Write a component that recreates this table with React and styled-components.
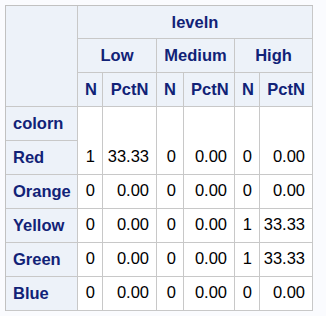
import React from "react";
import styled, { createGlobalStyle } from "styled-components";

const GlobalStyle = createGlobalStyle`
  html, body {
    margin: 0;
    padding: 0;
    background: #fafbfe;
  }
  body {
    padding: 5px 0 0 5px;
    font-family: "Liberation Sans", Arial, sans-serif;
  }
`;

const Table = styled.table`
  border-collapse: separate;
  border-spacing: 0;
  table-layout: fixed;
  width: 308px;
  border-top: 1px solid #c1c1c1;
  border-left: 1px solid #c1c1c1;
  font-size: 16.5px;
`;

const Header = styled.th`
  box-sizing: border-box;
  background: #edf2f9;
  color: #112277;
  font-weight: bold;
  text-align: ${(p) => (p.$left ? "left" : "center")};
  vertical-align: middle;
  padding: 0 7px;
  border-right: 1px solid #c8c8c8;
  border-bottom: 1px solid #c8c8c8;
  height: ${(p) => p.$h || 34}px;
  white-space: nowrap;
`;

const Cell = styled.td`
  box-sizing: border-box;
  background: #ffffff;
  color: #000000;
  text-align: right;
  vertical-align: bottom;
  padding: 0 7px 8px 0;
  border-right: 1px solid #c8c8c8;
  border-bottom: 1px solid #c8c8c8;
  height: 34px;
  white-space: nowrap;
`;

const widths = [72, 25, 54, 27, 51, 25, 53];

const rows = [
  ["Red", [1, "33.33", 0, "0.00", 0, "0.00"]],
  ["Orange", [0, "0.00", 0, "0.00", 0, "0.00"]],
  ["Yellow", [0, "0.00", 0, "0.00", 1, "33.33"]],
  ["Green", [0, "0.00", 0, "0.00", 1, "33.33"]],
  ["Blue", [0, "0.00", 0, "0.00", 0, "0.00"]],
];

const levels = ["Low", "Medium", "High"];

export default function App() {
  const [first, ...rest] = rows;
  return (
    <>
      <GlobalStyle />
      <Table>
        <colgroup>
          {widths.map((w, i) => (
            <col key={i} style={{ width: w }} />
          ))}
        </colgroup>
        <thead>
          <tr>
            <Header rowSpan={3} $h={33} />
            <Header colSpan={6} $h={33}>
              leveln
            </Header>
          </tr>
          <tr>
            {levels.map((l) => (
              <Header key={l} colSpan={2}>
                {l}
              </Header>
            ))}
          </tr>
          <tr>
            {levels.map((l) => (
              <React.Fragment key={l}>
                <Header>N</Header>
                <Header>PctN</Header>
              </React.Fragment>
            ))}
          </tr>
        </thead>
        <tbody>
          <tr>
            <Header $left>colorn</Header>
            {first[1].map((v, i) => (
              <Cell key={i} rowSpan={2}>
                {v}
              </Cell>
            ))}
          </tr>
          <tr>
            <Header $left>{first[0]}</Header>
          </tr>
          {rest.map(([name, vals]) => (
            <tr key={name}>
              <Header $left>{name}</Header>
              {vals.map((v, i) => (
                <Cell key={i}>{v}</Cell>
              ))}
            </tr>
          ))}
        </tbody>
      </Table>
    </>
  );
}
